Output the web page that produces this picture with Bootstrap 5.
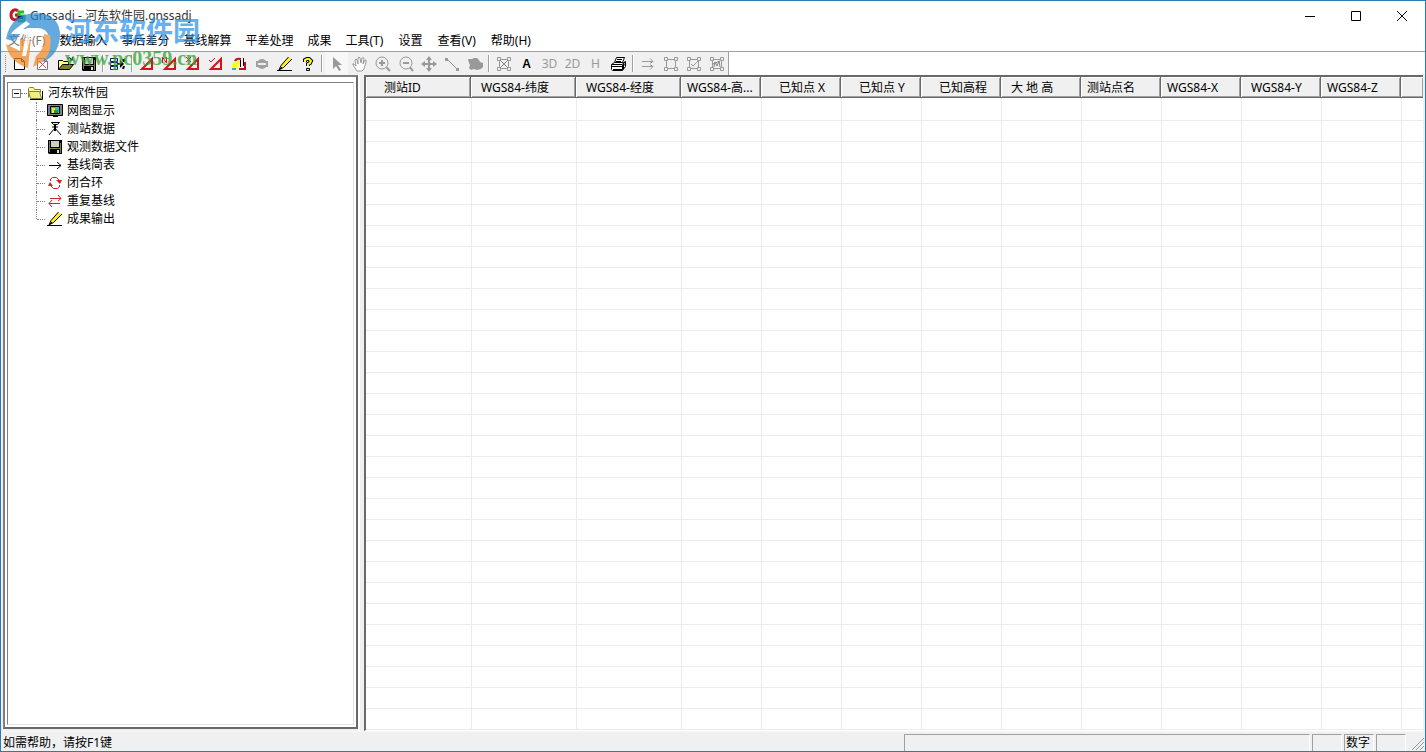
<!DOCTYPE html>
<html lang="zh-CN">
<head>
<meta charset="utf-8">
<meta name="viewport" content="width=device-width, initial-scale=1">
<title>Gnssadj - 河东软件园.gnssadj</title>
<link href="https://cdn.jsdelivr.net/npm/bootstrap@5.3.0/dist/css/bootstrap.min.css" rel="stylesheet">
<style>
body{font:12px/18px "Noto Sans","Noto Sans CJK SC",sans-serif;color:#000;background:#fff}
.app-window{height:100vh;border:1px solid #2a7ab8}
.title-bar{height:29px;padding-left:8px}
.title-bar h1{font-size:12px;line-height:18px;color:#333}
.win-btn{width:46px;height:28px;border:0;background:none;padding:0;line-height:0}
.menu-row{height:21px}
.menu-row a{color:#000;text-decoration:none;padding:1px 7px 0 8px;line-height:20px}
.menu-row a:nth-child(-n+7){padding-left:7px}
.menu-row a.dim{color:#777}
.tool-row{height:24px;border-top:1px solid #a0a0a0}
.tool-band{background:#f0f0f0;border-right:1px solid #a0a0a0;padding-left:7px}
.grip-dots{position:absolute;left:4px;top:3px;bottom:3px;border-left:1px dotted #888}
.tool{width:23px;height:23px;border:0;background:none;padding:0;line-height:0;display:flex;align-items:center;justify-content:center}
.tool.active{background:#f7f7f7}
.tool-sep{width:6px;display:flex;justify-content:center;padding:3px 0}
.tool-sep i{border-left:1px solid #a0a0a0;border-right:1px solid #fff}
.tool span{font:bold 12px/16px "Liberation Sans",sans-serif}
.tool span.faint{color:#999;font:12px/16px "Noto Sans",sans-serif}
.work-area{background:#f0f0f0;padding:0 2px 0 2px}
.tree-pane{width:355px;border:2px solid #696969;border-color:#808080 #696969 #696969 #808080;padding:5px 2px 2px;margin-bottom:2px;background:#fff}
.tree-inner{border:1px solid #e3e3e3;border-top-color:#808080;border-left-color:#808080;padding:1px 4px}
.splitter{width:6px;border-left:2px solid #fff}
.data-pane{border-left:2px solid #696969;border-top:2px solid #696969;border-bottom:1px solid #fff;background:#fff}
.tree-list{list-style:none;margin:0;padding:0}
.tree-list li{height:18px;line-height:18px}
.tree-list .leaf{margin-left:24px;padding-left:2px;border-left:1px dotted #808080}
.tree-list .leaf:last-child{border-left:0;padding-left:3px;position:relative}
.tree-list .leaf:last-child::before{content:"";position:absolute;left:0;top:0;height:9px;border-left:1px dotted #808080}
.twig{width:8px;border-top:1px dotted #808080;margin-left:-2px;margin-right:2px;flex:none}
.tree-list svg{flex:none}
.tree-list a{color:#000;text-decoration:none;margin-left:4px}
.toggle-box{width:9px;height:9px;border:1px solid #808080;background:#fff;padding:0;line-height:0;display:flex;align-items:center;justify-content:center}
.toggle-box i{width:5px;border-top:1px solid #000}
.root-twig{width:6px;border-top:1px dotted #808080}
.grid-table{table-layout:fixed;width:100%;border-collapse:separate;border-spacing:0}
.grid-table th{font-weight:400;height:21px;line-height:19px;padding:0 0 0 6px;background:#f0f0f0;border-right:1px solid #696969;border-bottom:1px solid #696969;box-shadow:inset 1px 1px #fff,inset -1px -1px #a0a0a0;white-space:nowrap;overflow:hidden}
.grid-table th:last-child{border-right:0}
.grid-table th.in-mid{padding-left:10px}
.grid-table th.in-far{padding-left:18px}
.grid-table td{height:21px;padding:0;border-bottom:1px solid #ececec;border-left:1px solid #ececec}
.grid-table td:first-child{border-left:0}
.grid-table tbody tr:first-child td{height:23px}
.c-wide{width:105px}.c-std{width:80px}
.status-row{height:20px;background:#f0f0f0;border-top:1px solid #f7f7f7}
.status-row .msg{padding:1px 0 0 2px;line-height:20px;font-family:"Noto Sans","Noto Sans CJK TC",sans-serif}
.status-box{height:18px;margin-top:2px;border:1px solid #fff;border-top-color:#a0a0a0;border-left-color:#a0a0a0;margin-right:2px;line-height:16px;padding-left:1px}
.sb-1{width:406px}.sb-2{width:30px}
.mark-layer{position:absolute;left:4px;top:7px;pointer-events:none}
.mark-layer svg{display:block}
.mark-name{position:absolute;left:60px;top:2px;font:700 27px/40px "Noto Sans CJK SC",sans-serif;color:#2b93ec;opacity:.72;white-space:nowrap}
.mark-url{position:absolute;left:60px;top:38px;font:700 20px/24px "Liberation Serif",serif;color:#35a035;opacity:.75;white-space:nowrap}
</style>
</head>
<body>
<svg width="0" height="0" class="position-absolute" aria-hidden="true">
<defs>
<g id="tri" fill="none" stroke="#d4141c" stroke-width="2"><path d="M3 13 13 3v10z"/></g>
<g id="corners" fill="none" stroke="#999"><path d="M3.500 3.500h9v9h-9z"/><path fill="#f0f0f0" d="M1.500 1.500h3v3h-3zM11.500 1.500h3v3h-3zM1.500 11.500h3v3h-3zM11.500 11.500h3v3h-3z"/></g>
<g id="floppy"><path fill="#000" d="M1 1h14v14H2l-1-1z"/><path fill="#808040" d="M2 2h1v11H2zM13 4h1v10h-1z"/><path fill="#ccc" d="M4 2h8v6H4z"/><path fill="#808040" d="M3 9h10v1H3z"/><path fill="#ddd" d="M10 11h2v3h-2z"/></g>
<g id="pencil"><path stroke="#000" fill="none" d="M0 14.500h15"/><path fill="#ffee20" d="M11 1 4 9l-2 5 5-2 8-9z"/><path stroke="#000" fill="none" d="M11.500 1 4 9.500 2 14l4.500-2.500L15 3M2 14l3-3"/></g>
</defs></svg>

<div class="app-window d-flex flex-column position-relative overflow-hidden">
<header class="title-bar d-flex align-items-center flex-shrink-0">
<svg width="17" height="16" viewBox="0 0 17 16"><path fill="none" stroke="#c01828" stroke-width="3" d="M9 3C6 0 2 3 2 7s3 6 7 4V7H6"/><path fill="none" stroke="#20c020" stroke-width="3" d="M15 4h-5v4h5v5H9"/><path fill="#101060" d="M9 8h5v3H9z"/></svg>
<h1 class="m-0 ms-1 fw-normal flex-grow-1">Gnssadj - 河东软件园.gnssadj</h1>
<button class="win-btn" aria-label="最小化"><svg width="12" height="12"><path stroke="#000" d="M1 6.500h10"/></svg></button>
<button class="win-btn" aria-label="最大化"><svg width="12" height="12"><path fill="none" stroke="#000" d="M1.500 1.500h9v9h-9z"/></svg></button>
<button class="win-btn" aria-label="关闭"><svg width="12" height="12"><path stroke="#000" d="m1 1 10 10M11 1 1 11"/></svg></button>
</header>
<nav class="menu-row d-flex flex-shrink-0">
<a href="#" class="dim">文件(F)</a><a href="#">数据输入</a><a href="#">事后差分</a><a href="#">基线解算</a><a href="#">平差处理</a><a href="#">成果</a><a href="#">工具(T)</a><a href="#">设置</a><a href="#">查看(V)</a><a href="#">帮助(H)</a>
</nav>
<div class="tool-row d-flex flex-shrink-0">
<div class="tool-band d-flex position-relative" role="toolbar" aria-label="工具栏">
<div class="grip-dots"></div>
<button class="tool" aria-label="新建"><svg width="16" height="16"><path fill="#fff" stroke="#000" d="M2.500 2.500h7l3 3v8h-10zM9.500 2.500v3h3"/></svg></button>
<button class="tool" aria-label="删除"><svg width="16" height="16"><path fill="#fff" stroke="#777" d="M2.500 2.500h7l3 3v8h-10zM9.500 2.500v3h3"/><path stroke="#e04040" d="m4 5 7 7M11 5l-7 7"/></svg></button>
<button class="tool" aria-label="打开"><svg width="16" height="16"><path fill="#ffff80" stroke="#000" d="M.5 13.500v-9h4l1 1h5v3"/><path fill="#808020" stroke="#000" d="m.5 13.500 4-5h11l-4 5z"/><path fill="none" stroke="#000" d="M9 2.500q3-2 5 1M14.500 1v3H12"/></svg></button>
<button class="tool" aria-label="保存"><svg width="16" height="16"><use href="#floppy"/></svg></button>
<div class="tool-sep"><i></i></div>
<button class="tool" aria-label="导入"><svg width="16" height="16"><path fill="#fff" stroke="#101080" d="M.5 2.500h7v3h-7zM.5 6.500h7v3h-7zM.5 10.500h7v3h-7z"/><path fill="#000" d="M8 7h2V4l4 4-4 4V9H8zM12 3h3v3h-2zM13 10h2l-1 3h-2z"/></svg></button>
<div class="tool-sep"><i></i></div>
<button class="tool" aria-label="三角网"><svg width="16" height="16"><use href="#tri"/></svg></button>
<button class="tool" aria-label="新三角网"><svg width="16" height="16"><use href="#tri"/><path fill="none" stroke="#d4141c" d="M.5 7V1l4 6V1"/></svg></button>
<button class="tool" aria-label="删除三角网"><svg width="16" height="16"><use href="#tri"/><path stroke="#d4141c" d="m1 1 5 5M6 1 1 6"/></svg></button>
<button class="tool" aria-label="检查三角网"><svg width="16" height="16"><use href="#tri"/><path fill="none" stroke="#d4141c" d="m1 4 2 2 4-4"/></svg></button>
<button class="tool" aria-label="平差"><svg width="16" height="16"><path fill="#ffff20" d="M1 8 6 4l3 3-3 6H1z"/><path fill="#28b8b8" d="M1 12h4v2H1z"/><path fill="none" stroke="#c01020" stroke-width="2" d="M4 5q1-3 6-2M8 13h6V6"/><path fill="none" stroke="#000" d="M9.500 4v7M12.500 2v8"/></svg></button>
<button class="tool" aria-label="停止"><svg width="16" height="16"><circle cx="8" cy="8" r="5" fill="#a0a0a0"/><path fill="#a0a0a0" d="M2 5h12v6H2z"/><path fill="#eee" d="M4 7h8v2H4z"/></svg></button>
<button class="tool" aria-label="编辑"><svg width="16" height="16"><use href="#pencil"/></svg></button>
<button class="tool" aria-label="帮助"><svg width="16" height="16"><path fill="none" stroke="#000" stroke-width="4" d="M5 6V4l2-1h2l2 2-1 2-2 1v2"/><path fill="none" stroke="#ffff20" stroke-width="2" d="M5 6V4l2-1h2l2 2-1 2-2 1v2"/><path fill="#ffff20" stroke="#000" d="M6.500 12.500h3v2h-3z"/></svg></button>
<div class="tool-sep"><i></i></div>
<button class="tool active" aria-label="选择"><svg width="16" height="16"><path fill="#999" d="M4 1v12l3-3 3 5 2-1-3-5h4z"/></svg></button>
<button class="tool" aria-label="平移"><svg width="16" height="16"><path fill="#fff" stroke="#999" d="M5 15 1 9q-1-2 1-1l2 2-1-6q1-2 2 0l1 4V2q1-2 2 0l1 5 1-5q2-1 2 1l-1 5 2-4q2 0 1 2l-2 7-2 2z"/></svg></button>
<button class="tool" aria-label="放大"><svg width="16" height="16" fill="none" stroke="#999"><circle cx="7" cy="7" r="6"/><path stroke-width="2" d="M4 7h6M7 4v6m4.500 1.500L15 15"/></svg></button>
<button class="tool" aria-label="缩小"><svg width="16" height="16" fill="none" stroke="#999"><circle cx="8" cy="7" r="6"/><path stroke-width="2" d="M5 7h6m1 4.500 3 3.500"/></svg></button>
<button class="tool" aria-label="移动"><svg width="16" height="16"><path stroke="#999" stroke-width="2" d="M8 2v12M2 8h12"/><path fill="#999" d="m8 0 3 4H5zM8 16l3-4H5zM0 8l4-3v6zM16 8l-4-3v6z"/></svg></button>
<button class="tool" aria-label="量线"><svg width="16" height="16"><path stroke="#999" d="m3 3 10 10"/><path fill="#999" d="M1 2h3v3H1zM12 12h3v3h-3z"/></svg></button>
<button class="tool" aria-label="区域"><svg width="16" height="16"><path fill="#999" d="M1 3h4l2-1h3l2 2 1 2 3 1v4l-2 2-4 1-3-1-3 1-2-2 1-3-1-2z"/></svg></button>
<div class="tool-sep"><i></i></div>
<button class="tool" aria-label="全图"><svg width="16" height="16"><use href="#corners"/><path stroke="#888" d="m4 4 8 8M12 4l-8 8"/></svg></button>
<button class="tool"><span>A</span></button>
<button class="tool"><span class="faint">3D</span></button>
<button class="tool"><span class="faint">2D</span></button>
<button class="tool"><span class="faint">H</span></button>
<button class="tool" aria-label="打印"><svg width="17" height="16"><path fill="#fff" stroke="#000" d="M4.500 6.500 6.500 1.500h8l-2 5"/><path fill="#fff" stroke="#000" d="m1.500 8.500 3-2h9l2-1v5l-3 4h-10l-1-1z"/><path fill="none" stroke="#000" d="M7 3.500h5M6 5.500h5M2 8.500h10l3-2M2 10.500h10l3-2M3 13.500h9M12.500 9v5M13.500 8v5"/></svg></button>
<div class="tool-sep"><i></i></div>
<button class="tool" aria-label="下一步"><svg width="16" height="16"><path fill="none" stroke="#999" d="M2 5.500h11M2 10.500h11M10 2.500l3 3-3 2M10 8.500l3 2-3 3"/></svg></button>
<button class="tool" aria-label="选框"><svg width="16" height="16"><use href="#corners"/></svg></button>
<button class="tool" aria-label="确认选框"><svg width="16" height="16"><use href="#corners"/><path fill="none" stroke="#999" d="m5 8 2 2 5-5"/></svg></button>
<button class="tool" aria-label="编辑选框"><svg width="16" height="16"><use href="#corners"/><path fill="none" stroke="#888" d="m5 11 1-5 2 4 2-5 1 6M4 8l7-3"/></svg></button>
</div>
</div>

<main class="work-area d-flex flex-grow-1 overflow-hidden">
<aside class="tree-pane d-flex flex-shrink-0">
<div class="tree-inner flex-grow-1">
<ul class="tree-list">
<li class="d-flex align-items-center"><button class="toggle-box" aria-label="折叠"><i></i></button><span class="root-twig"></span><svg width="17" height="16"><path fill="#ffff90" stroke="#808040" d="M1.500 12.500v-9l1-1h4l1 2h6v3"/><path fill="#f0f080" stroke="#808040" d="m3.500 13.500-2-7h11l2 7z"/><path stroke="#000" fill="none" d="M3 14.500h12.500V6"/></svg><a href="#" class="ms-1">河东软件园</a></li>
<li class="leaf d-flex align-items-center"><span class="twig"></span><svg width="16" height="16"><path fill="#808080" stroke="#000" d="M.5 1.500h15v11H.5z"/><path fill="#30b8e0" stroke="#000" d="M3.500 3.500h9v7h-9z"/><path fill="#ffe020" d="M5 5h3v2h3v3H5z"/><path fill="#20a020" d="M7 7h4v3H7z"/><path fill="#000" d="M6 13h5v1H6z"/></svg><a href="#">网图显示</a></li>
<li class="leaf d-flex align-items-center"><span class="twig"></span><svg width="16" height="16"><path fill="#ffff20" stroke="#000" d="M4.500 1.500h8l-2 2h-4z"/><path stroke="#000" stroke-width="2" d="M8 4v6"/><path fill="none" stroke="#000" d="M5 6h6M8 7l-6 7M8 7l6 7"/></svg><a href="#">测站数据</a></li>
<li class="leaf d-flex align-items-center"><span class="twig"></span><svg width="16" height="16"><use href="#floppy"/></svg><a href="#">观测数据文件</a></li>
<li class="leaf d-flex align-items-center"><span class="twig"></span><svg width="16" height="16"><path fill="none" stroke="#000" d="M2 8.500h12M10 5l4 3.500L10 12"/></svg><a href="#">基线简表</a></li>
<li class="leaf d-flex align-items-center"><span class="twig"></span><svg width="16" height="16"><path fill="none" stroke="#d42020" d="M3.500 6V4l2-1.500h4L12 5M12.500 10v2l-2 1.500h-4L4 11"/><path fill="#d42020" d="M9 5h6l-2 4zM1 11h5L3 7z"/></svg><a href="#">闭合环</a></li>
<li class="leaf d-flex align-items-center"><span class="twig"></span><svg width="16" height="16"><path fill="none" stroke="#d42020" d="M3 5.500h11M11 2l3 3.500L11 8M13 10.500H2M5 7l-3 3.500L5 14"/></svg><a href="#">重复基线</a></li>
<li class="leaf d-flex align-items-center"><span class="twig"></span><svg width="16" height="16"><use href="#pencil"/></svg><a href="#">成果输出</a></li>
</ul>
</div>
</aside>
<div class="splitter flex-shrink-0"></div>
<section class="data-pane flex-grow-1 overflow-hidden">
<table class="grid-table">
<colgroup><col class="c-wide"><col class="c-wide"><col class="c-wide"><col class="c-std"><col class="c-std"><col class="c-std"><col class="c-std"><col class="c-std"><col class="c-std"><col class="c-std"><col class="c-std"><col class="c-std"><col></colgroup>
<thead><tr><th class="in-far">测站ID</th><th class="in-mid">WGS84-纬度</th><th class="in-mid">WGS84-经度</th><th>WGS84-高...</th><th class="in-far">已知点 X</th><th class="in-far">已知点 Y</th><th class="in-far">已知高程</th><th class="in-mid">大 地 高</th><th>测站点名</th><th>WGS84-X</th><th class="in-mid">WGS84-Y</th><th>WGS84-Z</th><th></th></tr></thead>
<tbody id="rows"></tbody>
</table>
</section>
</main>

<footer class="status-row d-flex flex-shrink-0">
<span class="msg flex-grow-1">如需帮助，请按F1键</span>
<div class="status-box sb-1"></div><div class="status-box sb-2"></div><div class="status-box sb-2">数字</div><div class="status-box sb-2"></div>
<svg width="17" height="19"><path stroke="#999" d="M4 18 16 6M8 18l8-8M12 18l4-4"/></svg>
</footer>

<div class="mark-layer">
<svg width="58" height="62" viewBox="0 0 58 62"><g opacity=".72"><path fill="#2b8ad4" d="M1 31Q6 5 32 5q24 2 23 24-2 20-20 26 11-11 9-26-2-9-12-9H22L8 33z"/><path fill="#f08a28" d="M1 36 15 43V31h11l-3 29Q4 54 1 36zM28 59l3-11q10-8 8-22l6 1q3 20-9 27z"/><path fill="#fff" d="m8 23 13-10 4 3-7 5h20l-4 5H26l-5 22h-4l4-22H6z"/></g></svg>
<div class="mark-name">河东软件园</div>
<div class="mark-url">www.pc0359.cn</div>
</div>
</div>
<script src="https://cdn.jsdelivr.net/npm/bootstrap@5.3.0/dist/js/bootstrap.bundle.min.js"></script>
<script>
document.getElementById('rows').innerHTML = ('<tr>' + '<td></td>'.repeat(13) + '</tr>').repeat(60);
</script>
</body>
</html>
